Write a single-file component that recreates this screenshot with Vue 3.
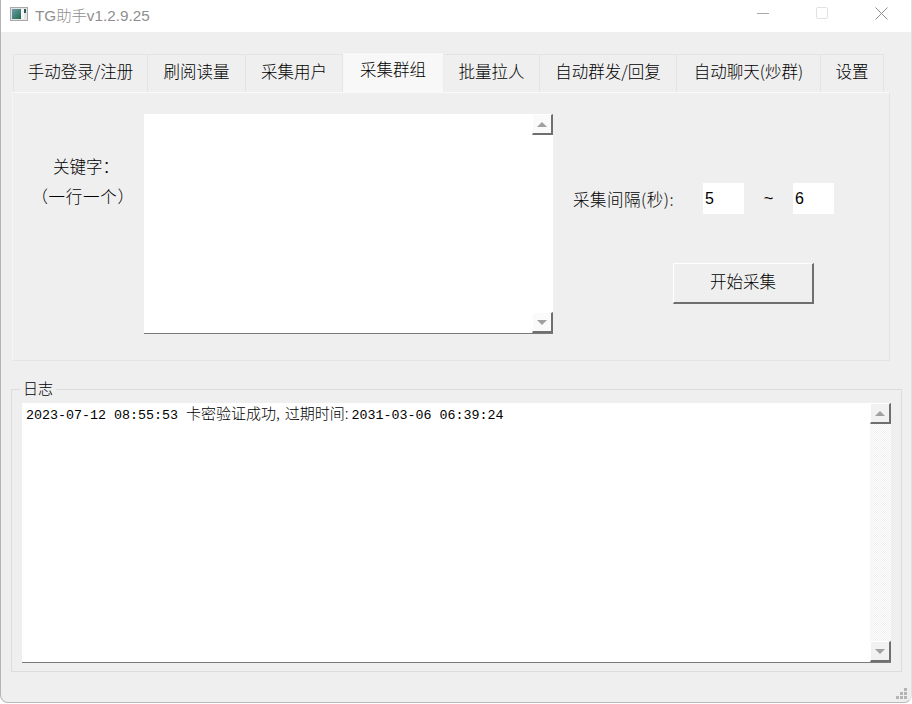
<script setup>
const tabs = [
  { label: '手动登录/注册', w: 135 },
  { label: '刷阅读量', w: 98 },
  { label: '采集用户', w: 97 },
  { label: '采集群组', w: 101, active: true },
  { label: '批量拉人', w: 96 },
  { label: '自动群发/回复', w: 137 },
  { label: '自动聊天(炒群)', w: 144 },
  { label: '设置', w: 63 },
]
</script>

<template>
  <div class="window">
    <header class="titlebar">
      <svg class="app-icon" width="18" height="14" viewBox="0 0 18 14">
        <defs>
          <linearGradient id="ico" x1="0" y1="0" x2="1" y2="1">
            <stop offset="0" stop-color="#6f9fa8" />
            <stop offset="1" stop-color="#1f6a4f" />
          </linearGradient>
        </defs>
        <rect x="0.5" y="0.5" width="17" height="13" fill="#e4e4e4" stroke="#a8a8a8" />
        <rect x="2" y="2" width="9" height="10" fill="url(#ico)" />
        <rect x="11" y="2" width="3" height="10" fill="#f6f6f6" />
        <rect x="14" y="2" width="2" height="4" fill="#2f5357" />
      </svg>
      <span class="title">TG助手v1.2.9.25</span>
      <div class="controls">
        <svg width="12" height="12" viewBox="0 0 12 12"><path d="M0 6.5H12" stroke="#a8a8a8" /></svg>
        <svg width="12" height="12" viewBox="0 0 12 12"><rect x="0.5" y="0.5" width="11" height="11" rx="1.5" fill="none" stroke="#e2e2e2" /></svg>
        <svg width="13" height="13" viewBox="0 0 13 13"><path d="M0.5 0.5L12.5 12.5M12.5 0.5L0.5 12.5" stroke="#8f8f8f" /></svg>
      </div>
    </header>

    <main class="content">
      <nav class="tabs">
        <div
          v-for="t in tabs"
          :key="t.label"
          class="tab"
          :class="{ active: t.active }"
          :style="{ width: t.w + 'px' }"
        >{{ t.label }}</div>
      </nav>

      <section class="pane">
        <div class="keyword-label">
          <span class="kw-first">关键字：</span>
          <span class="kw-second">（一行一个）</span>
        </div>
        <div class="textbox keyword-box">
          <div class="text-area"></div>
          <div class="scrollbar plain">
            <div class="sb-btn"><i class="arrow up"></i></div>
            <div class="sb-track"></div>
            <div class="sb-btn"><i class="arrow down"></i></div>
          </div>
        </div>
        <div class="side">
          <div class="interval">
            <span class="interval-label">采集间隔(秒):</span>
            <div class="num">5</div>
            <span class="tilde">~</span>
            <div class="num">6</div>
          </div>
          <button class="start">开始采集</button>
        </div>
      </section>

      <fieldset class="log-group">
        <legend>日志</legend>
        <div class="textbox log-box">
          <div class="text-area log-text"><span class="mono">2023-07-12 08:55:53 </span><span class="cjk">卡密验证成功<span class="comma">,</span>过期时间<span class="colon">:</span></span><span class="mono">2031-03-06 06:39:24</span></div>
          <div class="scrollbar">
            <div class="sb-btn"><i class="arrow up"></i></div>
            <div class="sb-track dither"></div>
            <div class="sb-btn"><i class="arrow down"></i></div>
          </div>
        </div>
      </fieldset>
    </main>

    <svg class="grip" width="15" height="14" viewBox="0 0 15 14" fill="#b4b4b4">
      <rect x="9" y="1" width="3" height="3" />
      <rect x="5" y="5" width="3" height="3" />
      <rect x="9" y="5" width="3" height="3" />
      <rect x="1" y="9" width="3" height="3" />
      <rect x="5" y="9" width="3" height="3" />
      <rect x="9" y="9" width="3" height="3" />
    </svg>
  </div>
</template>

<style>
html, body { margin: 0; background: #fff; }
</style>

<style scoped>
.window {
  position: relative;
  box-sizing: border-box;
  width: 912px;
  height: 703px;
  background: #efefef;
  border-left: 1px solid #b4b4b4;
  border-right: 1px solid #e0e0e0;
  border-bottom: 1px solid #b9b9b9;
  border-radius: 0 0 8px 8px;
  overflow: hidden;
  font-family: "Noto Sans CJK SC", "Liberation Sans", sans-serif;
  font-size: 16.5px;
  font-weight: 300;
  text-spacing-trim: space-all;
  color: #000;
}
.titlebar {
  height: 32px;
  background: #fff;
  display: flex;
  align-items: center;
  padding-left: 9px;
}
.app-icon { margin-right: 7px; margin-top: -5px; }
.title {
  font-family: "Liberation Sans", "Noto Sans CJK SC", sans-serif;
  font-size: 15.3px;
  color: #8f8f8f;
  margin-top: -5px;
}
.controls {
  margin-left: auto;
  display: flex;
  align-items: center;
  gap: 47px;
  padding-right: 23px;
  margin-top: -6px;
}
.content { padding: 22px 0 0 11px; }
.tabs { display: flex; padding-left: 1px; height: 38px; align-items: flex-end; }
.tab {
  box-sizing: border-box;
  height: 38px;
  padding-bottom: 5px;
  border: 1px solid #e4e4e4;
  border-left: 0;
  border-bottom: 0;
  background: #efefef;
  display: flex;
  align-items: center;
  justify-content: center;
  line-height: 1;
}
.tab:first-child { border-left: 1px solid #e4e4e4; }
.tab.active {
  height: 40px;
  padding-bottom: 6px;
  background: #f8f8f8;
  border-color: #ececec;
}
.pane {
  box-sizing: border-box;
  width: 878px;
  height: 269px;
  border: 1px solid #e3e3e3;
  border-top-color: #f9f9f9;
  border-left-color: #f6f6f6;
  display: flex;
  padding-top: 21px;
}
.keyword-label {
  box-sizing: border-box;
  width: 131px;
  height: 120px;
  padding-top: 41px;
  padding-left: 9px;
  display: flex;
  flex-direction: column;
  align-items: center;
  gap: 8px;
  line-height: 22px;
  flex: none;
}
.kw-first { margin-left: 6px; }
.kw-second { letter-spacing: 0.7px; }
.textbox {
  display: flex;
  background: #fff;
  box-sizing: border-box;
  border-bottom: 1px solid #7a7a7a;
}
.keyword-box { width: 409px; height: 220px; flex: none; }
.text-area { flex: 1; min-width: 0; }
.scrollbar {
  width: 21px;
  display: flex;
  flex-direction: column;
  flex: none;
}
.sb-btn {
  box-sizing: border-box;
  height: 21px;
  flex: none;
  background: #f1f1f1;
  border-top: 1px solid #fff;
  border-left: 1px solid #fff;
  border-right: 2px solid #6f6f6f;
  border-bottom: 2px solid #6f6f6f;
  display: flex;
  align-items: center;
  justify-content: center;
}
.plain .sb-btn { background: #fafafa; }
.sb-track { flex: 1; }
.sb-track.dither {
  background: repeating-conic-gradient(#fff 0 25%, #efefef 0 50%) 0 0 / 2px 2px;
}
.arrow {
  width: 0;
  height: 0;
  border-left: 5px solid transparent;
  border-right: 5px solid transparent;
}
.arrow.up { border-bottom: 5px solid #a0a0a0; }
.arrow.down { border-top: 5px solid #a0a0a0; }
.side { flex: 1; padding-left: 20px; }
.interval {
  display: flex;
  align-items: center;
  margin-top: 69px;
  height: 31px;
}
.interval-label { width: 130px; letter-spacing: 0.5px; flex: none; }
.num {
  box-sizing: border-box;
  width: 41px;
  height: 31px;
  background: #fff;
  padding-left: 2px;
  line-height: 31px;
  font-family: "Liberation Sans", sans-serif;
  font-size: 16px;
  font-weight: 400;
}
.tilde { width: 49px; text-align: center; font-family: "Liberation Sans", sans-serif; font-weight: 400; }
.start {
  display: block;
  box-sizing: border-box;
  margin: 49px 0 0 100px;
  width: 141px;
  height: 41px;
  background: #efefef;
  border: 1px solid #fff;
  border-right: 2px solid #6f6f6f;
  border-bottom: 2px solid #6f6f6f;
  padding: 0 0 4px;
  font: inherit;
  color: #000;
}
.log-group {
  box-sizing: border-box;
  width: 891px;
  height: 294px;
  margin: 17px 0 0 -1px;
  padding: 2px 10px 8px 10px;
  border: 1px solid #dcdcdc;
  min-width: 0;
  display: block;
}
legend {
  padding: 0 3px 3px;
  margin-left: -2px;
  line-height: 20px;
  font-size: 15px;
}
.log-box { height: 260px; width: 869px; }
.log-text {
  padding: 2px 4px 0 4px;
  font-size: 15px;
  line-height: 16px;
}
.mono { font-family: "Liberation Mono", monospace; font-size: 13.33px; font-weight: 400; white-space: pre; }
.cjk { font-family: "Noto Sans CJK SC", sans-serif; font-size: 15px; }
.comma { letter-spacing: 5px; }
.colon { letter-spacing: 3px; }
.grip { position: absolute; right: 1px; bottom: 1px; }
</style>
